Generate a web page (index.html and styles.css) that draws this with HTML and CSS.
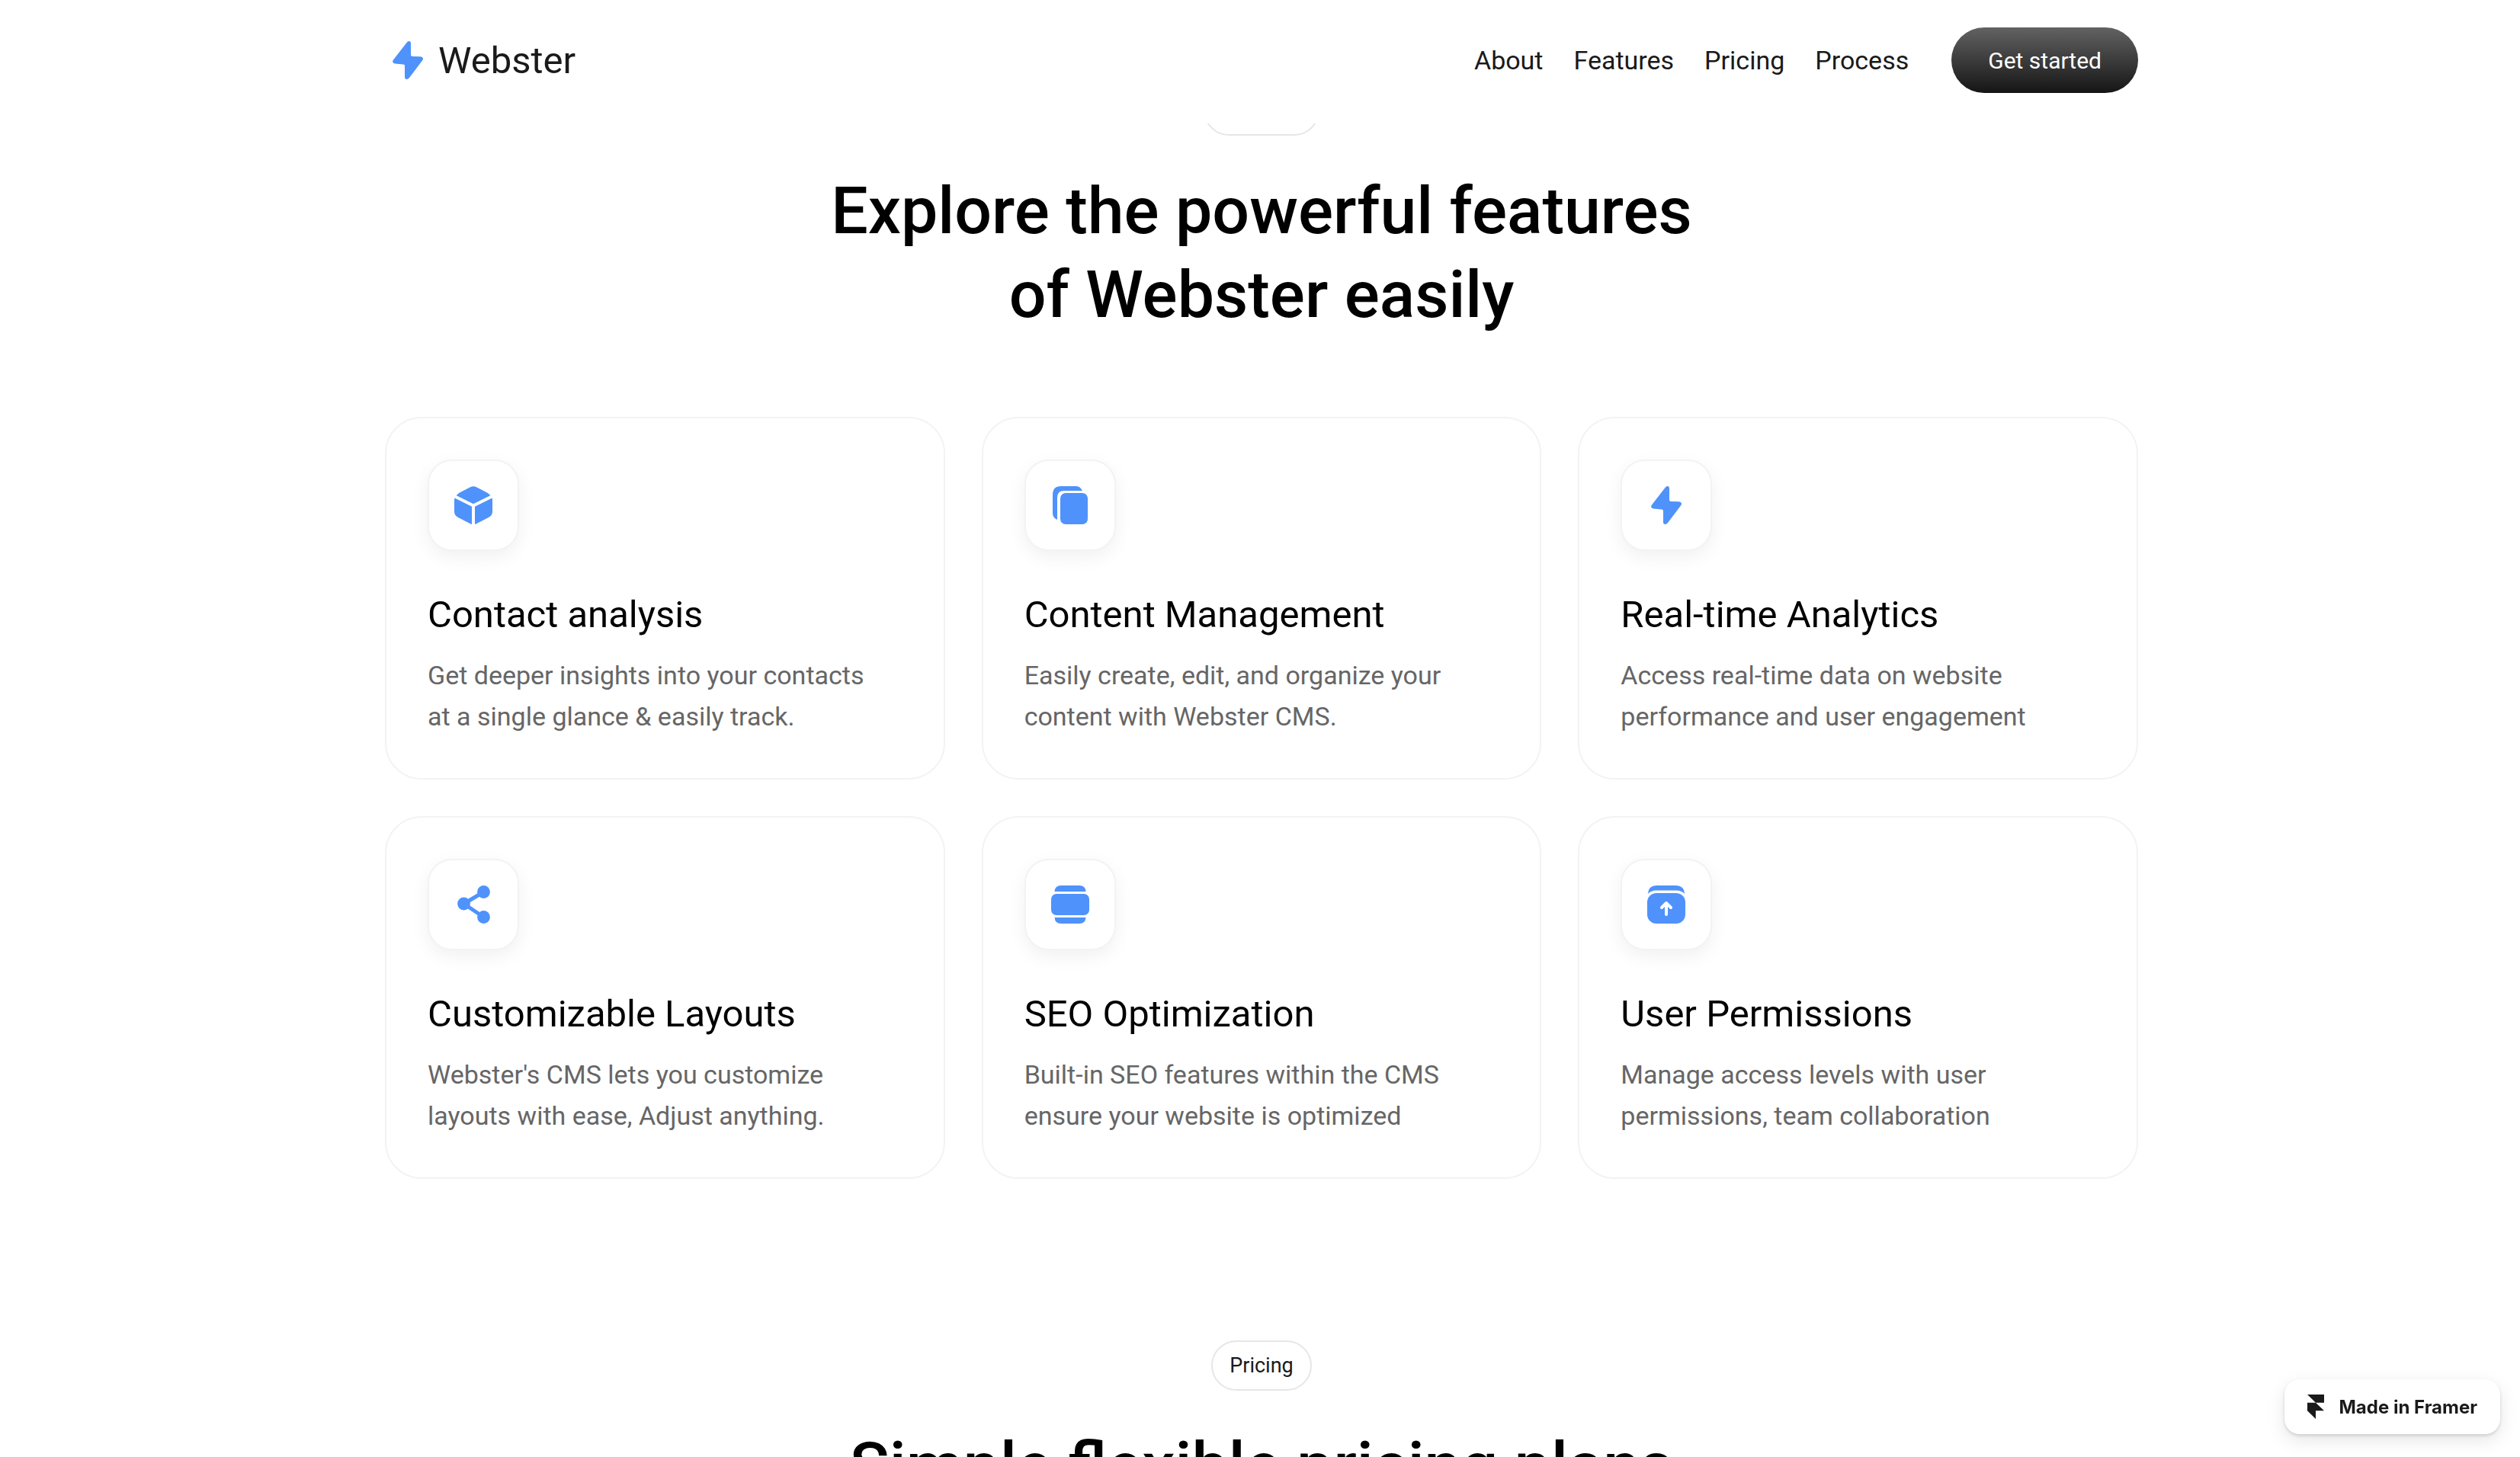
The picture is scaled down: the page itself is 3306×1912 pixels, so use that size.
FILE: index.html
```
<!DOCTYPE html>
<html lang="en">
<head>
  <meta charset="UTF-8" />
  <meta name="viewport" content="width=device-width, initial-scale=1.0" />
  <title>Webster</title>
  <link rel="stylesheet" href="styles.css">
</head>
<body>
  <header class="site-header">
    <div class="container header-inner">
      <a class="logo" href="#">
        <svg width="40" height="50" viewBox="0 0 40 50" aria-hidden="true">
          <path d="M18.5 2Q20 0 21.5 0Q24 0 24 3V18Q24 20 26 20L36 20.300Q42 21 39 25.500L22 48Q20.500 50 18.500 50Q16 50 16 47V32.500Q16 30.500 14 30.500L3 29.500Q-1.500 28.500 1 24.500Z" />
        </svg>
        <span>Webster</span>
      </a>
      <nav class="nav">
        <a href="#about">About</a>
        <a href="#features">Features</a>
        <a href="#pricing">Pricing</a>
        <a href="#process">Process</a>
        <button type="button" class="btn">Get started</button>
      </nav>
    </div>
  </header>

  <main>
    <section class="section container" id="features">
      <span class="pill">Features</span>
      <h2>Explore the powerful features<br>of Webster easily</h2>

      <div class="cards">
        <article class="card">
          <div class="icon-box">
            <svg width="50" height="50" viewBox="0 0 50 50" aria-hidden="true">
              <path d="M21.5 1Q25 -0.700 28.500 1L43 8.500Q45.500 10 47.300 12.300L25 23.300L2.700 12.300Q4.500 10 7 8.500Z" />
              <path d="M0.300 15.500L23 26.800V50Q21.500 49.500 20 48.800L5 41Q0 38.500 0 33V19Q0 17 0.300 15.500Z" />
              <path d="M49.700 15.500L27 26.800V50Q28.500 49.500 30 48.800L45 41Q50 38.500 50 33V19Q50 17 49.700 15.500Z" />
            </svg>
          </div>
          <h3>Contact analysis</h3>
          <p>Get deeper insights into your contacts<br>at a single glance &amp; easily track.</p>
        </article>

        <article class="card">
          <div class="icon-box">
            <svg width="46" height="50" viewBox="0 0 46 50" aria-hidden="true">
              <path d="M11 0H31Q36 0 39 6H15Q6 6 6 15V44Q0 41 0 36V11Q0 0 11 0Z" />
              <rect x="10" y="9" width="36" height="41" rx="7" />
            </svg>
          </div>
          <h3>Content Management</h3>
          <p>Easily create, edit, and organize your<br>content with Webster CMS.</p>
        </article>

        <article class="card">
          <div class="icon-box">
            <svg width="40" height="50" viewBox="0 0 40 50" aria-hidden="true">
              <path d="M18.5 2Q20 0 21.5 0Q24 0 24 3V18Q24 20 26 20L36 20.300Q42 21 39 25.500L22 48Q20.500 50 18.500 50Q16 50 16 47V32.500Q16 30.500 14 30.500L3 29.500Q-1.500 28.500 1 24.500Z" />
            </svg>
          </div>
          <h3>Real-time Analytics</h3>
          <p>Access real-time data on website<br>performance and user engagement</p>
        </article>

        <article class="card">
          <div class="icon-box">
            <svg width="43" height="50" viewBox="0 0 43 50" aria-hidden="true">
              <path class="link" d="M34.500 8.500L8.500 24L34.500 41.500" />
              <circle cx="8.500" cy="24" r="8.400" />
              <circle cx="34.500" cy="8.500" r="8.400" />
              <circle cx="34.500" cy="41.500" r="8.400" />
            </svg>
          </div>
          <h3>Customizable Layouts</h3>
          <p>Webster's CMS lets you customize<br>layouts with ease, Adjust anything.</p>
        </article>

        <article class="card">
          <div class="icon-box">
            <svg width="50" height="50" viewBox="0 0 50 50" aria-hidden="true">
              <path d="M4.500 8Q5 0 13 0H37Q45 0 45.500 8Z" />
              <rect y="11" width="50" height="28" rx="7" />
              <path d="M4.500 42Q5 50 13 50H37Q45 50 45.500 42Z" />
            </svg>
          </div>
          <h3>SEO Optimization</h3>
          <p>Built-in SEO features within the CMS<br>ensure your website is optimized</p>
        </article>

        <article class="card">
          <div class="icon-box">
            <svg width="50" height="50" viewBox="0 0 50 50" aria-hidden="true">
              <path d="M0.700 11Q2 0 12 0H38Q48 0 49.300 11Q45 6.500 38 6.500H12Q5 6.500 0.700 11Z" />
              <rect y="10" width="50" height="40" rx="12" />
              <path class="arrow" d="M25 38V23M19 29L25 23L31 29" />
            </svg>
          </div>
          <h3>User Permissions</h3>
          <p>Manage access levels with user<br>permissions, team collaboration</p>
        </article>
      </div>
    </section>

    <section class="section container" id="pricing">
      <span class="pill">Pricing</span>
      <h2>Simple flexible pricing plans</h2>
    </section>
  </main>

  <a class="badge" href="#">
    <svg width="22" height="32" viewBox="0 0 22 32" aria-hidden="true">
      <path d="M0 0H22V10.700H11ZM0 10.700H11L22 21.300H0ZM0 21.300H11V32Z" />
    </svg>
    <span>Made in Framer</span>
  </a>
</body>
</html>
```
FILE: styles.css
```
* {
  box-sizing: border-box;
  margin: 0;
  padding: 0;
}

html, body {
  height: 100%;
}

body {
  padding-left: 4px;
  font-family: Roboto, "Liberation Sans", sans-serif;
  background-color: #fff;
  color: #000;
  overflow: hidden;
}

a {
  color: inherit;
  text-decoration: none;
}

svg {
  display: block;
  fill: #4f92fb;
}

.container {
  width: 100%;
  max-width: 2300px;
  margin: 0 auto;
}

/* header */
.site-header {
  position: fixed;
  top: 0;
  left: 0;
  right: 0;
  z-index: 10;
  padding: 36px 0 40px 4px;
  background-color: #fff;
  color: #1a1a1a;
}

.header-inner {
  display: flex;
  align-items: center;
  justify-content: space-between;
}

.logo {
  display: flex;
  align-items: center;
  gap: 20px;
  padding-left: 10px;
  font-size: 49px;
}

.nav {
  display: flex;
  align-items: center;
  gap: 40px;
  font-size: 34px;
}

.btn {
  margin-left: 16px;
  padding: 0 48px;
  height: 86px;
  border: none;
  border-radius: 43px;
  background: linear-gradient(#626262, #151515);
  color: #fff;
  font-family: inherit;
  font-size: 30px;
  cursor: pointer;
}

/* sections */
.section {
  display: flex;
  flex-direction: column;
  align-items: center;
  padding-top: 112px;
  padding-bottom: 100px;
}

.pill {
  height: 66px;
  padding: 0 22px;
  border: 2px solid #e6e6e6;
  border-radius: 33px;
  color: #1a1a1a;
  font-size: 27px;
  line-height: 62px;
}

h2 {
  margin-top: 44px;
  font-size: 86px;
  font-weight: 500;
  line-height: 110px;
  text-align: center;
}

.cards {
  display: grid;
  grid-template-columns: repeat(3, 1fr);
  gap: 48px;
  width: 100%;
  margin-top: 105px;
}

.card {
  padding: 54px;
  border: 2px solid #f3f3f3;
  border-radius: 48px;
}

.icon-box {
  display: flex;
  align-items: center;
  justify-content: center;
  width: 120px;
  height: 120px;
  margin-bottom: 48px;
  border: 2px solid #f3f3f3;
  border-radius: 32px;
  background-color: #fff;
  box-shadow: 0 8px 24px rgba(0, 0, 0, 0.06);
}

.link {
  fill: none;
  stroke: #4f92fb;
  stroke-width: 5;
}

.arrow {
  fill: none;
  stroke: #fff;
  stroke-width: 4;
  stroke-linecap: round;
  stroke-linejoin: round;
}

.card h3 {
  margin-bottom: 16px;
  font-size: 49px;
  font-weight: 450;
  line-height: 72px;
}

.card p {
  color: #666;
  font-size: 34px;
  line-height: 54px;
}

/* badge */
.badge {
  position: fixed;
  right: 26px;
  bottom: 30px;
  display: flex;
  align-items: center;
  gap: 20px;
  height: 72px;
  padding: 0 30px;
  border-radius: 20px;
  background-color: #fff;
  box-shadow: 0 2px 4px rgba(0, 0, 0, 0.15), 0 8px 24px rgba(0, 0, 0, 0.1);
  color: #1a1a1a;
  font-family: Inter, sans-serif;
  font-size: 24px;
  font-weight: 700;
}

.badge svg {
  fill: #1a1a1a;
}
```
